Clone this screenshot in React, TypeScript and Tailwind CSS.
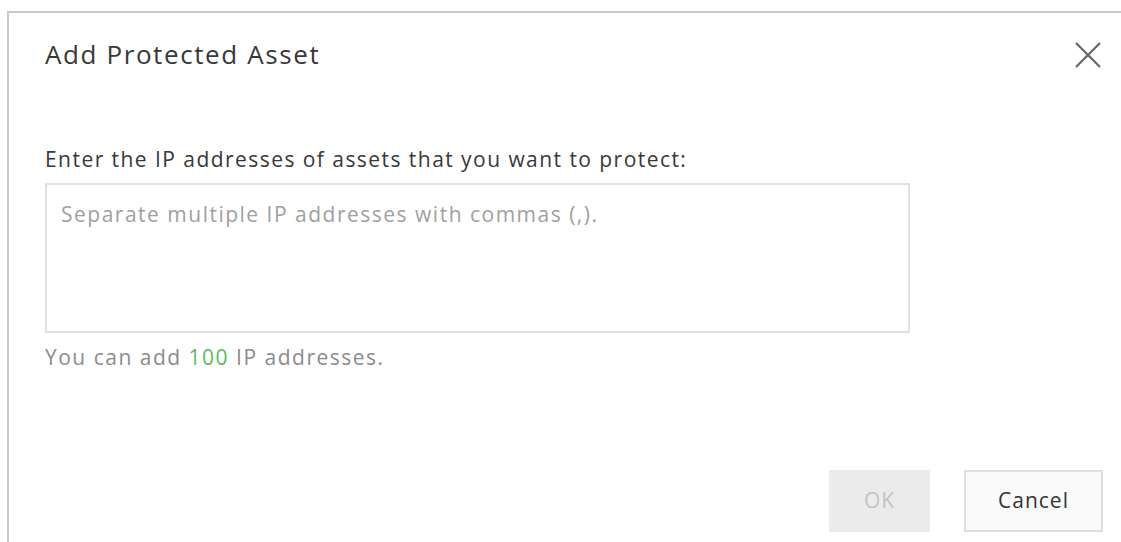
export default function App() {
  return (
    <div className="w-[1121px] h-[542px] overflow-hidden bg-white pt-[11px] pl-[7px] font-['Open_Sans',sans-serif]">
      <div className="h-[560px] border-l-2 border-t-2 border-[#c9c9c9] flex flex-col">
        {/* header */}
        <div className="flex items-start justify-between pl-[36px] pr-[20px] pt-[25px]">
          <h2 className="text-[26px] leading-[32px] tracking-[1.6px] text-[#383838]">Add Protected Asset</h2>
          <button className="mt-[4px] text-[#666]">
            <svg width="26" height="26" viewBox="0 0 26 26" fill="none" stroke="currentColor" strokeWidth="2.2">
              <path d="M1 1L25 25M25 1L1 25" />
            </svg>
          </button>
        </div>

        {/* body */}
        <div className="pl-[36px] pt-[75px]">
          <label className="block text-[21px] leading-[28px] tracking-[1.45px] text-[#383838]">
            Enter the IP addresses of assets that you want to protect:
          </label>
          <textarea
            className="mt-[10px] block w-[865px] h-[150px] border-2 border-[#e1e1e1] px-[14px] pt-[15px] pb-[10px] text-[21px] leading-[28px] tracking-[1.5px] text-[#333] placeholder:text-[#a0a0a0] resize-none outline-none"
            placeholder="Separate multiple IP addresses with commas (,)."
          />
          <p className="mt-[10px] text-[21px] leading-[28px] tracking-[1.5px] text-[#8c8c8c]">
            You can add <span className="text-[#5cb85c]">100</span> IP addresses.
          </p>
        </div>

        {/* footer */}
        <div className="flex justify-end gap-[34px] pr-[18px] mt-[99px]">
          <button className="w-[101px] h-[62px] bg-[#ebebeb] text-[21px] tracking-[1px] text-[#c4c4c4]">OK</button>
          <button className="w-[139px] h-[62px] border-2 border-[#dedede] bg-[#fafafa] text-[21px] tracking-[1px] text-[#333]">
            Cancel
          </button>
        </div>
      </div>
    </div>
  );
}
